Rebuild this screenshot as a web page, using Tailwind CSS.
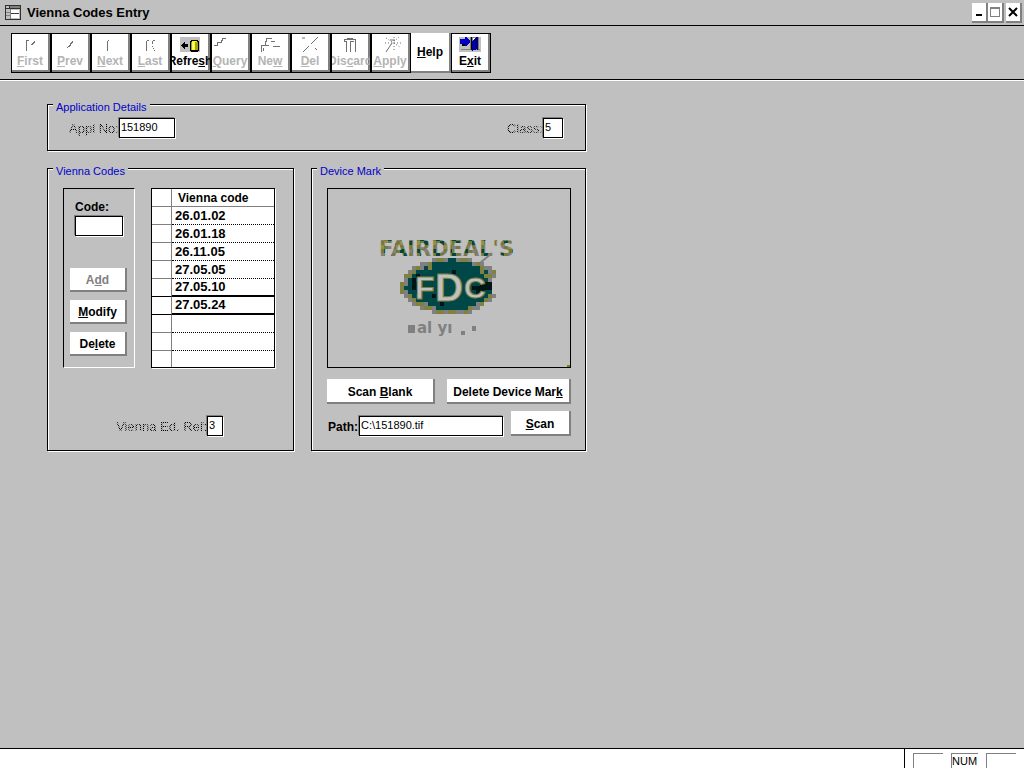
<!DOCTYPE html>
<html lang="en">
  <head>
    <meta charset="UTF-8" />
    <meta name="viewport" content="width=device-width, initial-scale=1.0" />
    <title>Vienna Codes Entry</title>
    <script src="https://cdn.jsdelivr.net/npm/@tailwindcss/browser@4"></script>
  </head>
  <body class="bg-[#c0c0c0] text-black flex flex-col min-h-screen font-['Liberation_Sans',Arial,sans-serif] text-xs">
    <!-- Title bar -->
    <header class="h-[26px] shrink-0 border-b border-black flex items-center pl-[5px] pr-[2px]">
      <svg class="w-4 h-4 mr-[6px]" viewBox="0 0 16 16" shape-rendering="crispEdges" aria-hidden="true">
        <path fill="#303030" d="M0 0h16v15H0z" />
        <path fill="#c0c0c0" d="M1 1h3v2H1zM1 4h14v10H1z" />
        <path fill="#808080" d="M5 1h10v2H5zM1 7h4v1H1zM1 10h4v1H1zM5 4h1v10H5z" />
        <path fill="#fff" d="M6 5h8v3H6zM6 9h8v4H6z" />
        <path fill="#404040" d="M6 8h8v1H6z" />
      </svg>
      <h1 class="text-[13px] font-bold">Vienna Codes Entry</h1>
      <div class="ml-auto flex">
        <button aria-label="Minimize" class="w-4 h-5 bg-white border-r-2 border-b-2 border-[#808080] flex items-center justify-center">
          <svg class="w-[14px] h-[18px] shrink-0" viewBox="0 0 14 18" shape-rendering="crispEdges"><path d="M4 11h6v2H4z" /></svg>
        </button>
        <button aria-label="Restore" class="w-4 h-5 bg-white border-r-2 border-b-2 border-[#808080] flex items-center justify-center">
          <svg class="w-[14px] h-[18px] shrink-0" viewBox="0 0 14 18" shape-rendering="crispEdges"><path fill="#808080" fill-rule="evenodd" d="M2 4h10v10H2zM3 6h8v7H3z" /></svg>
        </button>
        <button aria-label="Close" class="w-4 h-5 ml-[2px] bg-white border-r-2 border-b-2 border-[#808080] flex items-center justify-center">
          <svg class="w-[14px] h-[18px] shrink-0" viewBox="0 0 14 18"><path stroke="#000" stroke-width="2" d="M3 5l8 8M11 5l-8 8" /></svg>
        </button>
      </div>
    </header>

    <!-- Toolbar -->
    <nav class="h-[54px] shrink-0 border-b border-black shadow-[0_1px_0_#fff] flex items-start pl-[11px] pt-[7px] font-bold">
      <button disabled class="w-10 h-10 pr-[2px] border border-black bg-white shadow-[inset_-2px_-2px_0_#808080] text-[#b4b4b4] overflow-hidden flex flex-col items-center">
        <svg class="w-6 h-[19px] shrink-0" viewBox="0 0 24 19" fill="none" stroke="#707070" shape-rendering="crispEdges"><path d="M8.500 6v11M8 6.500h3M13 10.500h2M14 9.500h2M15 8.500h2M16 7.500h1" /></svg>
        <span class="leading-4"><u>F</u>irst</span>
      </button>
      <button disabled class="w-10 h-10 pr-[2px] border border-black bg-white shadow-[inset_-2px_-2px_0_#808080] text-[#b4b4b4] overflow-hidden flex flex-col items-center">
        <svg class="w-6 h-[19px] shrink-0" viewBox="0 0 24 19" fill="none" stroke="#707070" shape-rendering="crispEdges"><path d="M9 13.500h1M10 12.500h2M11 11.500h2M12 10.500h1M12 9.500h2M13 8.500h2M14 7.500h1" /></svg>
        <span class="leading-4"><u>P</u>rev</span>
      </button>
      <button disabled class="w-10 h-10 pr-[2px] border border-black bg-white shadow-[inset_-2px_-2px_0_#808080] text-[#b4b4b4] overflow-hidden flex flex-col items-center">
        <svg class="w-6 h-[19px] shrink-0" viewBox="0 0 24 19" fill="none" stroke="#707070" shape-rendering="crispEdges"><path d="M9.500 7v10M10 6.500h1" /></svg>
        <span class="leading-4"><u>N</u>ext</span>
      </button>
      <button disabled class="w-10 h-10 pr-[2px] border border-black bg-white shadow-[inset_-2px_-2px_0_#808080] text-[#b4b4b4] overflow-hidden flex flex-col items-center">
        <svg class="w-6 h-[19px] shrink-0" viewBox="0 0 24 19" fill="none" stroke="#707070" shape-rendering="crispEdges"><path d="M8.500 7v10M9 6.500h2M14.500 7v3M15 6.500h2M14 12.500h1M15 14.500h1M16 16.500h1" /></svg>
        <span class="leading-4"><u>L</u>ast</span>
      </button>
      <button class="w-10 h-10 pr-[2px] border border-black bg-white shadow-[inset_-2px_-2px_0_#808080] overflow-hidden flex flex-col items-center">
        <svg class="w-6 h-[19px] shrink-0" viewBox="0 0 24 19" shape-rendering="crispEdges">
          <path fill="#c0c0c0" d="M2 3h20v15H2z" />
          <path d="M3 11h1v-1h1V9h1V8h1v2h3v3H7v2H6v-1H5v-1H4v-1H3z" />
          <path d="M13 6h7v1h1v10h-1v1h-7v-1h-1V7h1z" />
          <path fill="#ff0" d="M14 8h3v8h-3zM14 7h5v1h-5z" />
          <path fill="#a0a020" d="M13 8h1v8h-1zM17 8h3v8h-3z" />
          <path fill="#fff" d="M15 9h1v6h-1z" />
        </svg>
        <span class="leading-4">Refre<u>s</u>h</span>
      </button>
      <button disabled class="w-10 h-10 pr-[2px] border border-black bg-white shadow-[inset_-2px_-2px_0_#808080] text-[#b4b4b4] overflow-hidden flex flex-col items-center">
        <svg class="w-9 h-[19px] shrink-0" viewBox="0 0 36 19" fill="none" stroke="#707070" shape-rendering="crispEdges"><path d="M2 11.500h3.500V8.500h3.500V6.500h1.500V4.500h3" /></svg>
        <span class="leading-4"><u>Q</u>uery</span>
      </button>
      <button disabled class="w-10 h-10 pr-[2px] border border-black bg-white shadow-[inset_-2px_-2px_0_#808080] text-[#b4b4b4] overflow-hidden flex flex-col items-center">
        <svg class="w-6 h-[19px] shrink-0" viewBox="0 0 24 19" fill="none" stroke="#707070" shape-rendering="crispEdges"><path d="M3.500 18v-6.500h4V7.500h1V4.500h5M7 11.500h4M13 7.500h4M15 12.500h7M5.500 14v3" /></svg>
        <span class="leading-4">Ne<u>w</u></span>
      </button>
      <button disabled class="w-10 h-10 pr-[2px] border border-black bg-white shadow-[inset_-2px_-2px_0_#808080] text-[#b4b4b4] overflow-hidden flex flex-col items-center">
        <svg class="w-6 h-[19px] shrink-0" viewBox="0 0 24 19" fill="none" stroke="#707070"><path d="M5 18l6-6M13 10l7-7M4 4h3M17 14l2 2" /></svg>
        <span class="leading-4"><u>D</u>el</span>
      </button>
      <button disabled class="w-10 h-10 pr-[2px] border border-black bg-white shadow-[inset_-2px_-2px_0_#808080] text-[#b4b4b4] overflow-hidden flex flex-col items-center">
        <svg class="w-6 h-[19px] shrink-0" viewBox="0 0 24 19" fill="none" stroke="#707070" shape-rendering="crispEdges"><path d="M6.500 8V5.500h3V4.500h5v1h3V8M6 7.500h3M8.500 7v11M12.500 8v10M17.500 7v11M12 7.500h4M10 5.500h5" /></svg>
        <span class="leading-4">Dis<u>c</u>ard</span>
      </button>
      <button disabled class="w-10 h-10 pr-[2px] border border-black bg-white shadow-[inset_-2px_-2px_0_#808080] text-[#b4b4b4] overflow-hidden flex flex-col items-center">
        <svg class="w-6 h-[19px] shrink-0" viewBox="0 0 24 19" fill="none" stroke="#707070"><path d="M8 18l6-9M12 6h5" /><path stroke-dasharray="1 2" d="M8 4l14 9M21 3l-9 8M7 9h16M16 3v13" /></svg>
        <span class="leading-4"><u>A</u>pply</span>
      </button>
      <button class="w-10 h-10 bg-white border-r-2 border-b-2 border-[#808080]"><u>H</u>elp</button>
      <button class="w-10 h-10 pr-[2px] border border-black bg-white shadow-[inset_-2px_-2px_0_#808080] overflow-hidden flex flex-col items-center">
        <svg class="w-6 h-[19px] shrink-0" viewBox="0 0 24 19" shape-rendering="crispEdges">
          <path fill="#c0c0c0" d="M1 3h22v15H1z" />
          <path fill="#808080" d="M12 3h9v12h-9zM3 15h19v1H3z" />
          <path fill="#fff" d="M15 4h2v3h-2z" />
          <path fill="#000080" d="M19 3h1v13h-1zM14 7l5-4v12l-5 2z" />
          <path fill="#0000c0" d="M2 5h5V3h2v1h1v1h1v1h1v3h-1v1h-1v1H9v1H7v-2H2zM15 8h2v7h-2z" />
          <path d="M4 10h3v2H4zM13 3h1v13h-1z" />
        </svg>
        <span class="leading-4">E<u>x</u>it</span>
      </button>
    </nav>

    <main class="grow pl-[47px] pt-[13px]">
      <form class="w-[539px]">
        <fieldset class="h-[58px] border border-black shadow-[1px_1px_0_#fff,inset_1px_1px_0_#fff]">
          <legend class="ml-[5px] px-[3px] pt-[6px] leading-4 text-[11px] bg-[#c0c0c0] text-[#0000c8]">Application Details</legend>
          <div class="mt-[3px] pl-[21px] pr-[22px] flex items-center">
            <label for="applNo" class="text-[13px] pt-[2px] text-transparent bg-clip-text bg-[repeating-conic-gradient(#000_0_25%,#b0b0b0_0_50%)] bg-[length:2px_2px]">Appl No:</label>
            <input id="applNo" value="151890" class="w-14 h-5 px-px pb-[2px] text-[11px] bg-white border border-black shadow-[1px_1px_0_#fff,-1px_-1px_0_#808080]" />
            <label for="class" class="ml-auto pt-[2px] text-[13px] text-transparent bg-clip-text bg-[repeating-conic-gradient(#000_0_25%,#b0b0b0_0_50%)] bg-[length:2px_2px]">Class:</label>
            <input id="class" value="5" class="w-5 h-5 px-px pb-[2px] text-[11px] bg-white border border-black shadow-[1px_1px_0_#fff,-1px_-1px_0_#808080]" />
          </div>
        </fieldset>

        <div class="mt-[6px] flex justify-between">
          <fieldset class="w-[247px] h-[294px] border border-black shadow-[1px_1px_0_#fff,inset_1px_1px_0_#fff]">
            <legend class="ml-[5px] px-[3px] pt-[6px] leading-4 text-[11px] bg-[#c0c0c0] text-[#0000c8]">Vienna Codes</legend>
            <div class="mt-[9px] pl-[15px] flex gap-4">
              <div class="w-[72px] h-[180px] border border-t-black border-l-black border-r-white border-b-white pl-[6px] pt-[10px] font-bold">
                <label for="code" class="block ml-[5px] leading-4">Code:</label>
                <input id="code" class="block ml-[5px] mt-px w-12 h-5 px-[2px] bg-white border border-black shadow-[1px_1px_0_#fff,-1px_-1px_0_#808080]" />
                <div class="mt-8 flex flex-col gap-2 w-[57px]">
                  <button type="button" disabled class="h-6 pt-[2px] bg-white text-[#808080] border-r-2 border-b-2 border-[#808080]">A<u>d</u>d</button>
                  <button type="button" class="h-6 pt-[2px] bg-white border-r-2 border-b-2 border-[#808080]"><u>M</u>odify</button>
                  <button type="button" class="h-6 pt-[2px] bg-white border-r-2 border-b-2 border-[#808080]">De<u>l</u>ete</button>
                </div>
              </div>
              <table class="w-[124px] h-[180px] table-fixed border-separate border-spacing-0 bg-white border border-black shadow-[1px_1px_0_#fff] text-[13px] leading-4 font-bold text-left">
                <thead>
                  <tr class="h-[18px]">
                    <th class="w-5 p-0 border-r border-b border-[#808080]"></th>
                    <th class="p-0 pl-[6px] text-xs leading-4 border-b border-[#808080]">Vienna code</th>
                  </tr>
                </thead>
                <tbody>
                  <tr class="h-[18px]"><td class="p-0 border-r border-b border-[#808080]"></td><td class="p-0 pl-[3px] border-b border-dotted border-black">26.01.02</td></tr>
                  <tr class="h-[18px]"><td class="p-0 border-r border-b border-[#808080]"></td><td class="p-0 pl-[3px] border-b border-dotted border-black">26.01.18</td></tr>
                  <tr class="h-[18px]"><td class="p-0 border-r border-b border-[#808080]"></td><td class="p-0 pl-[3px] border-b border-dotted border-black">26.11.05</td></tr>
                  <tr class="h-[18px]"><td class="p-0 border-r border-b border-[#808080]"></td><td class="p-0 pl-[3px] border-b border-dotted border-black">27.05.05</td></tr>
                  <tr class="h-[18px]"><td class="p-0 border-r border-r-[#808080] border-b border-b-black"></td><td class="p-0 pl-[3px] border-b-2 border-black">27.05.10</td></tr>
                  <tr class="h-[18px]"><td class="p-0 border-r border-r-[#808080] border-b border-b-black"></td><td class="p-0 pl-[3px] border-b-2 border-black">27.05.24</td></tr>
                  <tr class="h-[18px]"><td class="p-0 border-r border-b border-[#808080]"></td><td class="p-0 border-b border-dotted border-black"></td></tr>
                  <tr class="h-[18px]"><td class="p-0 border-r border-b border-[#808080]"></td><td class="p-0 border-b border-dotted border-black"></td></tr>
                  <tr class="h-[16px]"><td class="p-0 border-r border-[#808080]"></td><td class="p-0"></td></tr>
                </tbody>
              </table>
            </div>
            <div class="mt-12 pr-[70px] flex items-center justify-end">
              <label for="edRef" class="pt-[2px] text-[13px] text-transparent bg-clip-text bg-[repeating-conic-gradient(#000_0_25%,#b0b0b0_0_50%)] bg-[length:2px_2px]">Vienna Ed. Ref:</label>
              <input id="edRef" value="3" class="w-4 h-5 px-px pb-[2px] text-[11px] bg-white border border-black shadow-[1px_1px_0_#fff,-1px_-1px_0_#808080]" />
            </div>
          </fieldset>

          <fieldset class="w-[275px] h-[294px] border border-black shadow-[1px_1px_0_#fff,inset_1px_1px_0_#fff]">
            <legend class="ml-[5px] px-[3px] pt-[6px] leading-4 text-[11px] bg-[#c0c0c0] text-[#0000c8]">Device Mark</legend>
            <div class="mt-[9px] pl-[15px] pr-[14px] font-bold">
              <div class="h-[180px] border border-black">
                <svg class="block w-[242px] h-[178px]" viewBox="0 0 242 178" role="img" aria-label="Fairdeal's FDC device mark">
                  <defs>
                    <pattern id="mottle" width="16" height="16" patternUnits="userSpaceOnUse">
                      <path fill="#78783c" d="M0 0h16v16H0z" />
                      <path fill="#808080" d="M4 0h4v4H4zM12 8h4v4h-4zM0 12h4v4H0z" />
                      <path fill="#004848" d="M0 4h4v4H0zM8 12h4v4H8zM12 0h4v4h-4z" />
                      <path fill="#90904c" d="M8 4h4v4H8zM4 8h4v4H4z" />
                    </pattern>
                  </defs>
                  <text x="51" y="67" font-family="DejaVu Sans" font-size="21" font-weight="bold" fill="url(#mottle)">FAIRDEAL'S</text>
                  <path stroke="#808080" stroke-width="2" d="M152 74l12-10" />
                  <g id="oval" shape-rendering="crispEdges"></g>
                  <g font-family="Liberation Sans" font-weight="bold" fill="#c0c0c0" stroke="#808040">
                    <text x="87" y="110" font-size="32">F</text>
                    <text x="107" y="112" font-size="39">D</text>
                    <text x="136" y="109" font-size="30">C</text>
                  </g>
                  <g fill="#808080">
                    <path d="M80 136h7v8h-7zM133 142h4v4h-4zM144 137h4v5h-4z" />
                    <text x="89" y="144" font-family="DejaVu Sans" font-size="15">al yı</text>
                  </g>
                  <path fill="#808000" d="M239 176h3v2h-3z" />
                </svg>
              </div>
              <div class="mt-[11px] flex gap-3">
                <button type="button" class="w-[108px] h-[25px] pt-[2px] bg-white border-r-2 border-b-2 border-[#808080]">Scan <u>B</u>lank</button>
                <button type="button" class="grow h-[25px] pt-[2px] bg-white border-r-2 border-b-2 border-[#808080] whitespace-nowrap">Delete Device Mar<u>k</u></button>
              </div>
              <div class="mt-[7px] flex items-end">
                <label for="path" class="w-8 leading-4 pl-px pb-px">Path:</label>
                <input id="path" value="C:\151890.tif" class="w-36 h-5 px-px pb-[2px] text-[11px] font-normal bg-white border border-black shadow-[1px_1px_0_#fff,-1px_-1px_0_#808080]" />
                <button type="button" class="ml-2 grow h-[25px] pt-[2px] bg-white border-r-2 border-b-2 border-[#808080]"><u>S</u>can</button>
              </div>
            </div>
          </fieldset>
        </div>
      </form>
    </main>

    <!-- Status bar -->
    <footer class="h-5 shrink-0 bg-white border-t border-black flex justify-end">
      <div class="border-l border-black px-2 pt-1 flex gap-2">
        <div class="w-[30px] border-t border-l border-[#808080]"></div>
        <div class="w-[27px] border-t border-l border-[#808080] text-[11px] leading-[14px]">NUM</div>
        <div class="w-[30px] border-t border-l border-[#808080]"></div>
      </div>
    </footer>

    <script>
      // Badge of the device mark, one character per 4px cell
      const rows = [
        "........googTTgoog......",
        ".....ggoTTTTTTTTTTgog...",
        "...gogToTTTTTTTTTTTTogg.",
        "..goTTTTTTTTTkTTTTTToTgo",
        ".ooTkTTTTTTTTTTTTTTTToog",
        ".gTkTTTTTTTTTTTTTTTTTTg.",
        "ogTkkTTTTTTTTTTTTTTTkkk.",
        "oTTkkTTTTTTTTTTTTTkkkkk.",
        "ogTTkTTTTTTTTTTTTTTkkTT.",
        ".goTTTTTkTTTTTTTTTTTTTog",
        "..goTTTTTTTTTTTTTTTTTog.",
        "...googTTTkTTTTTTTTgo...",
        ".....googTTTTTTTTogg....",
        "........googooggog......",
      ];
      const colors = { T: "#004848", k: "#001418", g: "#808080", o: "#808040" };
      let cells = "";
      rows.forEach((row, y) => {
        [...row].forEach((c, x) => {
          if (colors[c]) cells += `<rect x="${72 + x * 4}" y="${69 + y * 4}" width="4" height="4" fill="${colors[c]}" />`;
        });
      });
      document.getElementById("oval").innerHTML = cells;
    </script>
  </body>
</html>
